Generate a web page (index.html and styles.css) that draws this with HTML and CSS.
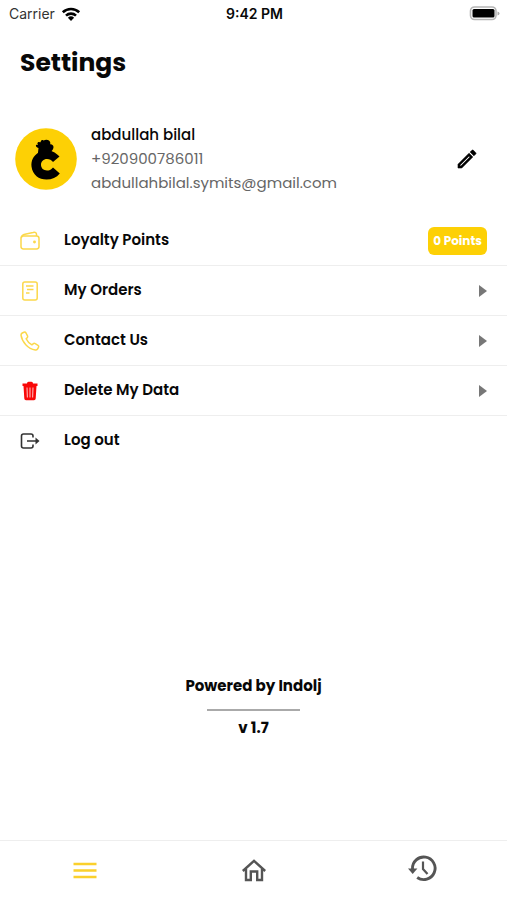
FILE: index.html
```html
<!DOCTYPE html>
<html lang="en">
<head>
<meta charset="utf-8">
<meta name="viewport" content="width=device-width, initial-scale=1">
<title>Settings</title>
<link rel="stylesheet" href="styles.css">
</head>
<body>
<div class="status">
  <div class="carrier">Carrier
    <svg width="20" height="14" viewBox="0 0 20 14" fill="none" stroke="#000" stroke-width="2.6"><path d="M1.800 5.200a12 12 0 0 1 16.400 0M5 8.600a7.200 7.200 0 0 1 10 0"/><path d="M10 14 6.900 10.800a4.500 4.500 0 0 1 6.200 0z" fill="#000" stroke="none"/></svg>
  </div>
  <div class="time">9:42 PM</div>
  <svg class="battery" width="31" height="15" viewBox="0 0 31 15"><rect x="1.500" y="1" width="25.500" height="12.500" rx="4" fill="#fff" stroke="#b5b5b5" stroke-width="1.600"/><rect x="3.500" y="3" width="22" height="8.500" rx="1.500"/><path d="M28.500 5.500q2 .6 2 2t-2 2z" fill="#aaa"/></svg>
</div>
<main>
  <h1>Settings</h1>
  <section class="profile">
    <svg width="62" height="62" viewBox="0 0 62 62" role="img" aria-label="Logo"><circle cx="31" cy="31" r="30.800" fill="#fdd005"/><path d="M44.500 28.500C37 20 28 21.500 23.500 24.500 18 28 16 33 16.500 38.500 17.500 47 24 51.500 31.500 51.500 37 51.500 41.500 49.500 44.800 45.500L38 39.500C36 42 34 42.500 32 42.500 28.500 42.500 26 40.200 26 36.800 26 33.500 28.500 31 32 31 34.500 31 36.500 32 38 34z"/><path d="M22.500 29 23.500 20c-2-.3-3-1.800-2.500-3.300l2 .2c-.8-1-.8-2.200.2-3l2.300.3c.3-1.600 1.100-2.200 2.200-2.200l1 .6c1.500-1.200 4-1.100 5.300 0 1.400 1.200 1.500 2.400 1.200 3.600 2-.2 3.400 1.200 3.300 3-.1 1.900-1.200 3.400-2.500 4l1 5z"/></svg>
    <div class="person">
      <strong>abdullah bilal</strong>
      <span>+920900786011</span>
      <span>abdullahbilal.symits@gmail.com</span>
    </div>
    <button class="edit" aria-label="Edit profile"><svg width="24" height="24" viewBox="0 0 24 24"><path d="m14.060 9.020.92.92L5.920 19H5v-.92l9.060-9.060M17.660 3c-.25 0-.51.1-.7.290l-1.830 1.830 3.750 3.750 1.830-1.830a1 1 0 0 0 0-1.410l-2.340-2.340a1 1 0 0 0-.71-.29zM14.060 6.190 3 17.250V21h3.750L17.810 9.940z" stroke="#000" stroke-width=".6"/></svg></button>
  </section>
  <nav class="menu" aria-label="Settings">
    <a href="#points">
      <svg class="icon" viewBox="0 0 20 20" fill="none" stroke="#fbd84b" stroke-width="1.500"><rect x="1" y="5" width="18" height="13" rx="2.400"/><path d="M1.400 6.500C1.600 4.300 3 3.700 5 3.200l8-1.700c2.500-.6 3.500.1 3.500 1.800V5"/><circle cx="14.500" cy="11" r=".7" fill="#fbd84b"/></svg>
      <span>Loyalty Points</span><b class="badge">0 Points</b>
    </a>
    <a href="#orders">
      <svg class="icon" viewBox="0 0 20 20" fill="none" stroke="#fbd84b" stroke-width="1.500"><rect x="2.800" y="1" width="14.400" height="18" rx="2"/><path d="M6 5h7.500M7 8.500h6.500M6 12h3.500" stroke-width="1.300"/></svg>
      <span>My Orders</span><i class="arrow"></i>
    </a>
    <a href="#contact">
      <svg class="icon" viewBox="0 0 20 20" fill="none" stroke="#fbd84b" stroke-width="1.500" stroke-linejoin="round"><path d="M2.200 2 4 1.200q1.300-.4 2 .8l1.500 2.800q.6 1.200-.4 2.100l-1 .9q1.700 3.700 5.800 6l1.200-1q1-.8 2.100-.2l2.800 1.700q1.200.8.5 2l-1 1.700q-.8 1.200-2.200 1C8 17.800 2 11 1 4.200Q.9 2.800 2.200 2z"/></svg>
      <span>Contact Us</span><i class="arrow"></i>
    </a>
    <a href="#delete">
      <svg class="icon" viewBox="0 0 20 20"><path d="M7 2.500Q7 .8 8.500.8h3Q13 .8 13 2.500h4.500V5h-1l-.8 12.500q-.1 1.700-1.700 1.700H6q-1.600 0-1.700-1.700L3.500 5h-1V2.500z" fill="#f90808"/><path d="m7 6.500.4 10M10 6.500v10M13 6.500l-.4 10" stroke="#ffb5b5" stroke-width="1.100"/></svg>
      <span>Delete My Data</span><i class="arrow"></i>
    </a>
    <a href="#logout">
      <svg class="icon" viewBox="0 0 20 20" fill="none" stroke="#333" stroke-width="1.600"><path d="M13 6.500V5q0-2-2-2H3.500q-2 0-2 2v10q0 2 2 2H11q2 0 2-2v-1.500M7 10h11"/><path d="m15.500 6.500 4 3.500-4 3.500z" fill="#333" stroke="none"/></svg>
      <span>Log out</span>
    </a>
  </nav>
  <footer><p>Powered by Indolj</p><hr><p>v 1.7</p></footer>
</main>
<nav class="tabs" aria-label="Main">
  <a href="#menu" aria-label="Menu"><svg width="28" height="28" viewBox="0 0 28 28" stroke="#fad02c" stroke-width="2.400"><path d="M2.500 7h23M2.500 13.500h23M2.500 20h23"/></svg></a>
  <a href="#home" aria-label="Home"><svg width="28" height="28" viewBox="0 0 28 28" fill="none" stroke="#555" stroke-width="2.400"><path d="M2.800 14 14 3.900 25.200 14M6 12v11h4.800v-8.500h6.400V23H22V12"/></svg></a>
  <a href="#history" aria-label="History"><svg width="30" height="30" viewBox="0 0 30 30" fill="none" stroke="#555" stroke-width="2.900"><path d="M4.500 13A11.300 11.300 0 1 1 9.200 21.500"/><path d="M0 12.500h9.400l-4.700 5.500z" fill="#555" stroke="none"/><path d="M15 5.500V13l4.500 5" stroke-width="2.200"/></svg></a>
</nav>
</body>
</html>
```
FILE: styles.css
```css
* { box-sizing: border-box; }
body {
  margin: 0;
  min-height: 100vh;
  display: flex;
  flex-direction: column;
  background: #fff;
  color: #080808;
  font-family: Poppins, Inter, "Liberation Sans", sans-serif;
}
svg { display: block; flex: none; overflow: visible; }
a { color: inherit; text-decoration: none; }
.status {
  display: grid;
  grid-template-columns: 1fr auto 1fr;
  align-items: center;
  height: 27px;
  padding: 0 7px 0 9px;
  font: 14px/20px Inter, sans-serif;
}
.carrier { display: flex; align-items: center; gap: 6px; color: #333; }
.time { font-weight: 600; }
.battery { justify-self: end; }
main { flex: 1; display: flex; flex-direction: column; }
h1 { margin: 16px 20px 0; font-size: 25px; line-height: 40px; font-weight: 700; }
.profile {
  display: flex;
  align-items: center;
  gap: 14px;
  margin-top: 40px;
  padding: 0 28px 0 15px;
}
.person { flex: 1; display: flex; flex-direction: column; font-size: 15px; line-height: 24px; color: #666; }
.person strong { font-weight: 500; color: #080808; }
.edit { padding: 0; border: 0; background: none; }
.menu { margin-top: 21px; }
.menu a {
  display: flex;
  align-items: center;
  height: 50px;
  padding: 0 20px;
  border-bottom: 1px solid #eee;
  font-size: 15px;
  line-height: 22px;
  font-weight: 600;
}
.menu a:last-child { border-color: transparent; }
.menu span { flex: 1; padding-bottom: 2px; }
.icon { width: 20px; height: 20px; margin-right: 24px; }
.badge {
  padding: 0 5px;
  border-radius: 6px;
  background: #fdd005;
  color: #fff;
  font-size: 12px;
  line-height: 28px;
  font-weight: 700;
}
.arrow {
  border: solid transparent;
  border-width: 6px 0 6px 8px;
  border-left-color: #777;
}
footer { margin: auto 0 102px; text-align: center; font-size: 15px; line-height: 20px; font-weight: 700; }
footer p { margin: 0; }
hr { width: 93px; margin: 13px auto 7px; border: 0; border-top: 2px solid #aaa; }
.tabs { display: grid; grid-template-columns: repeat(3, 1fr); height: 60px; border-top: 1px solid #eee; }
.tabs a { display: grid; place-items: center; }
```
